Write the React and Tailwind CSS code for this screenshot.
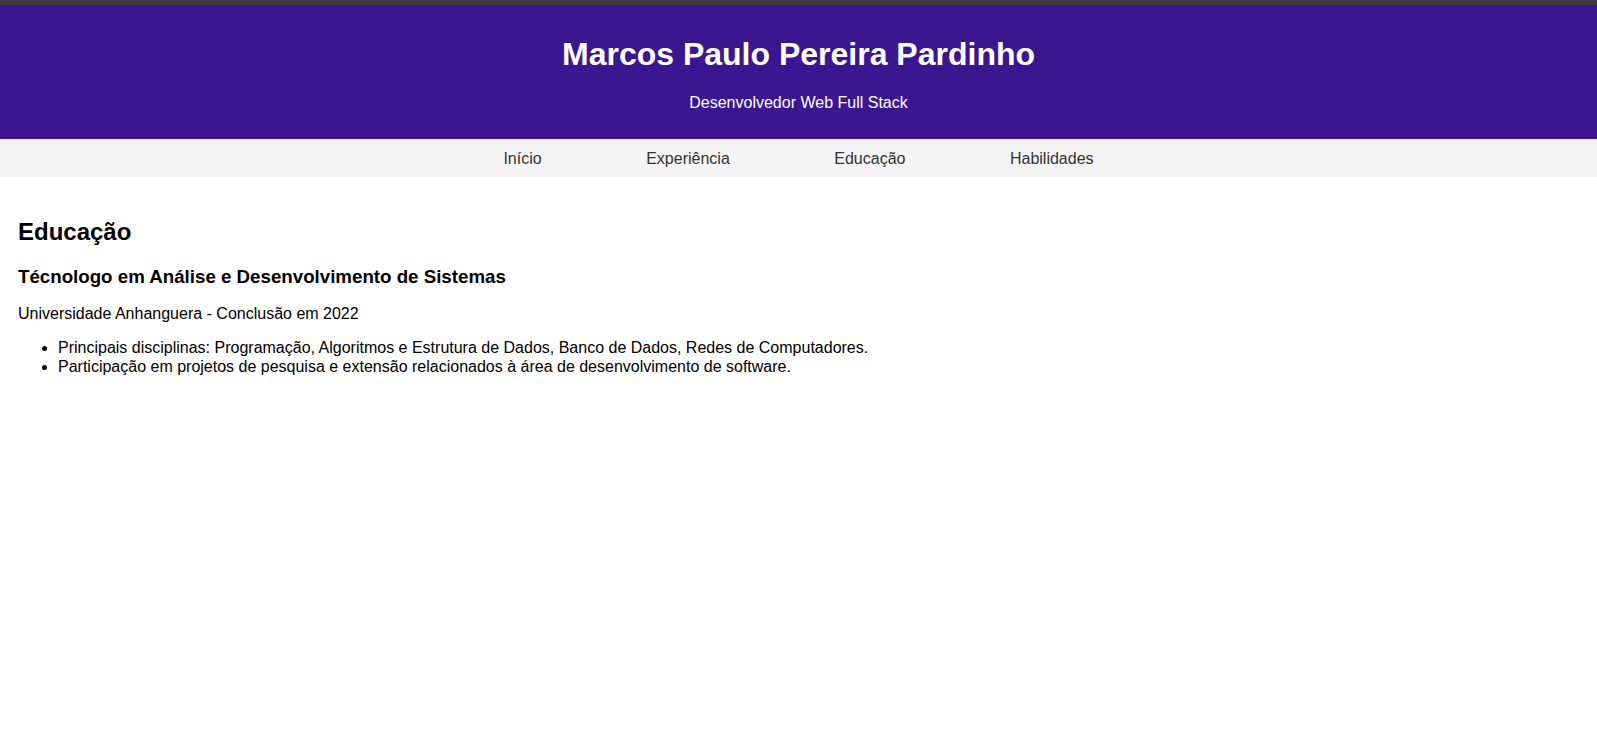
export default function App() {
  const font = { fontFamily: '"Liberation Sans", Arial, sans-serif' };
  return (
    <div className="min-h-[744px] bg-white text-black" style={font}>
      <div className="h-[5px] bg-[#3c3c3e]" />
      <header className="bg-[#3b1691] text-white text-center pt-[31px] pb-[27px]">
        <h1 className="text-[32px] font-bold leading-[37px] mb-[21px]">Marcos Paulo Pereira Pardinho</h1>
        <p className="text-[16px] leading-[18px]">Desenvolvedor Web Full Stack</p>
      </header>
      <nav className="bg-[#f4f4f4] pt-[11px] pb-[9px]">
        <ul className="flex justify-center gap-[104.5px] text-[16px] leading-[18px] text-[#333]">
          <li><a href="#inicio">Início</a></li>
          <li><a href="#experiencia">Experiência</a></li>
          <li><a href="#educacao">Educação</a></li>
          <li><a href="#habilidades">Habilidades</a></li>
        </ul>
      </nav>
      <main className="pt-[21px] px-[18px]">
        <section>
          <h2 className="text-[24px] font-bold leading-[28px] mt-[20px] mb-[20px]">Educação</h2>
          <h3 className="text-[18.72px] font-bold leading-[21px] mb-[18px]">Técnologo em Análise e Desenvolvimento de Sistemas</h3>
          <p className="text-[16px] leading-[18.4px] mb-[16px]">Universidade Anhanguera - Conclusão em 2022</p>
          <ul className="list-disc pl-[40px] text-[16px] leading-[18.4px]">
            <li>Principais disciplinas: Programação, Algoritmos e Estrutura de Dados, Banco de Dados, Redes de Computadores.</li>
            <li>Participação em projetos de pesquisa e extensão relacionados à área de desenvolvimento de software.</li>
          </ul>
        </section>
      </main>
    </div>
  );
}
